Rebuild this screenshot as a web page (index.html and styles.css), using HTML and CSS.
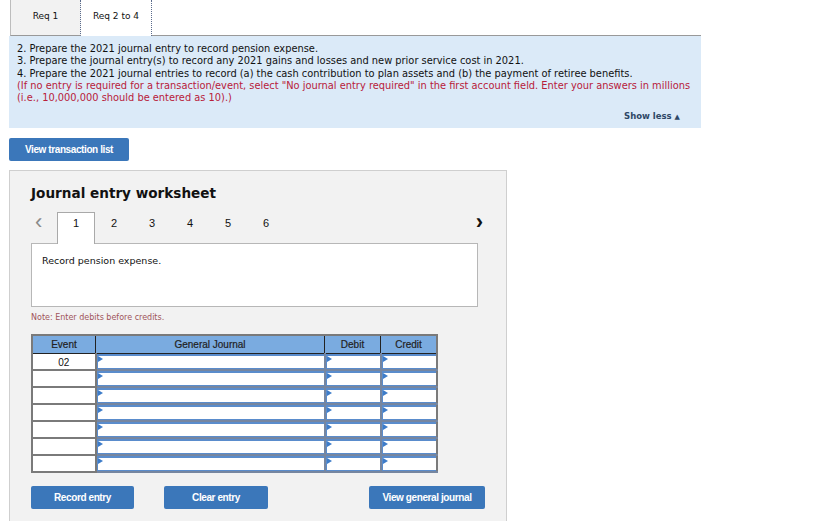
FILE: index.html
```html
<!DOCTYPE html>
<html lang="en">

<head>
  <meta charset="UTF-8">
  <title>Journal Entry Worksheet</title>
  <link rel="stylesheet" href="styles.css">
</head>

<body>

  <div class="req-tabs">
    <div class="req-tab">Req 1</div>
    <div class="req-tab active">Req 2 to 4</div>
    <div class="req-fill"></div>
  </div>

  <div class="instructions">
    <p>2. Prepare the 2021 journal entry to record pension expense.</p>
    <p>3. Prepare the journal entry(s) to record any 2021 gains and losses and new prior service cost in 2021.</p>
    <p>4. Prepare the 2021 journal entries to record (a) the cash contribution to plan assets and (b) the payment of retiree benefits.</p>
    <p class="warn">(If no entry is required for a transaction/event, select "No journal entry required" in the first account field. Enter your answers in millions (i.e., 10,000,000 should be entered as 10).)</p>
    <div class="show-less">Show less <span class="tri">&#9650;</span></div>
  </div>

  <button class="btn btn-list">View transaction list</button>

  <div class="worksheet">
    <h2>Journal entry worksheet</h2>

    <div class="nav">
      <span class="arrow prev">&lsaquo;</span>
      <span class="num current">1</span>
      <span class="num">2</span>
      <span class="num">3</span>
      <span class="num">4</span>
      <span class="num">5</span>
      <span class="num">6</span>
      <span class="arrow next">&rsaquo;</span>
    </div>

    <div class="desc">Record pension expense.</div>

    <div class="note">Note: Enter debits before credits.</div>

    <table class="journal">
      <thead>
        <tr>
          <th class="c-event">Event</th>
          <th class="c-acct">General Journal</th>
          <th class="c-amt">Debit</th>
          <th class="c-amt">Credit</th>
        </tr>
      </thead>
      <tbody>
        <tr><td class="ev">02</td><td class="inp"><div></div></td><td class="inp"><div></div></td><td class="inp"><div></div></td></tr>
        <tr><td class="ev"></td><td class="inp"><div></div></td><td class="inp"><div></div></td><td class="inp"><div></div></td></tr>
        <tr><td class="ev"></td><td class="inp"><div></div></td><td class="inp"><div></div></td><td class="inp"><div></div></td></tr>
        <tr><td class="ev"></td><td class="inp"><div></div></td><td class="inp"><div></div></td><td class="inp"><div></div></td></tr>
        <tr><td class="ev"></td><td class="inp"><div></div></td><td class="inp"><div></div></td><td class="inp"><div></div></td></tr>
        <tr><td class="ev"></td><td class="inp"><div></div></td><td class="inp"><div></div></td><td class="inp"><div></div></td></tr>
        <tr><td class="ev"></td><td class="inp"><div></div></td><td class="inp"><div></div></td><td class="inp"><div></div></td></tr>
      </tbody>
    </table>

    <div class="actions">
      <button class="btn btn-record">Record entry</button>
      <button class="btn btn-clear">Clear entry</button>
      <button class="btn btn-view">View general journal</button>
    </div>
  </div>

</body>

</html>
```

FILE: styles.css
```css
body {
  margin: 0;
  font-family: "DejaVu Sans", Verdana, sans-serif;
  color: #111;
  background-color: #fff;
}

.req-tabs {
  display: flex;
  margin-left: 10px;
  width: 691px;
  height: 36px;
}

.req-tab {
  box-sizing: border-box;
  width: 71px;
  padding-top: 11px;
  text-align: center;
  font-size: 9px;
  background-color: #f2f2f2;
  border-left: 1px solid #bdbdbd;
  border-right: 1px dotted #5a6b8c;
  border-bottom: 1px solid #999;
}

.req-tab.active {
  background-color: #fff;
  border-left: 0;
  border-bottom: 0;
}

.req-fill {
  flex: 1;
  border-bottom: 1px solid #999;
}

.instructions {
  margin-left: 9px;
  width: 676px;
  padding: 7px 8px 4px 8px;
  background-color: #dbeaf8;
  font-size: 9.85px;
  line-height: 12.3px;
}

.instructions p {
  margin: 0;
}

.instructions .warn {
  color: #b8203a;
}

.show-less {
  text-align: right;
  margin-top: 6px;
  padding-right: 13px;
  font-size: 8.5px;
  font-weight: bold;
  color: #2e4766;
}

.show-less .tri {
  font-size: 7px;
}

.btn {
  border: 0;
  border-radius: 2px;
  background-color: #3b77ba;
  color: #fff;
  font-family: "Liberation Sans", Arial, sans-serif;
  font-size: 10px;
  font-weight: bold;
  letter-spacing: -0.4px;
  height: 23px;
  padding: 0;
  cursor: pointer;
}

.btn-list {
  display: block;
  margin: 10px 0 0 9px;
  width: 120px;
}

.worksheet {
  box-sizing: border-box;
  margin: 9px 0 0 9px;
  width: 498px;
  padding: 14px 0 24px 21px;
  background-color: #f2f2f2;
  border: 1px solid #cfcfcf;
}

.worksheet h2 {
  margin: 0;
  font-size: 13.6px;
  font-weight: bold;
  color: #111;
}

.nav {
  display: flex;
  align-items: flex-start;
  margin-top: 11px;
  width: 452px;
  height: 31px;
  font-family: "Liberation Sans", Arial, sans-serif;
  font-size: 11px;
}

.nav .num {
  box-sizing: border-box;
  width: 38px;
  height: 24px;
  text-align: center;
  line-height: 22px;
}

.nav .num.current {
  height: 32px;
  background-color: #fff;
  border: 1px solid #a9a9a9;
  border-bottom: 0;
  line-height: 20px;
}

.nav .arrow {
  box-sizing: border-box;
  font-size: 22px;
  line-height: 20px;
  height: 24px;
}

.nav .prev {
  width: 26px;
  padding-left: 4px;
  color: #8a8a8a;
}

.nav .next {
  margin-left: auto;
  color: #111;
  font-weight: bold;
}

.desc {
  box-sizing: border-box;
  width: 447px;
  height: 64px;
  padding: 11px 10px;
  background-color: #fff;
  border: 1px solid #b7b7b7;
  font-size: 9.5px;
}

.note {
  margin-top: 6px;
  font-size: 8px;
  color: #a0545a;
}

.journal {
  margin-top: 12px;
  border-collapse: collapse;
  border: 2px solid #7a7a7a;
  font-family: "Liberation Sans", Arial, sans-serif;
  font-size: 10px;
}

.journal th {
  height: 17px;
  padding: 0;
  background-color: #7aabe0;
  font-weight: normal;
  color: #222;
  border-left: 1px solid #222;
  border-bottom: 1px solid #222;
  -webkit-text-stroke: 0.2px #222;
}

.journal th:first-child {
  border-left: 0;
}

.c-event {
  width: 62px;
}

.c-acct {
  width: 228px;
}

.c-amt {
  width: 55px;
}

.journal td {
  height: 15px;
  padding: 0;
  border: 1px solid #7a7a7a;
  border-top: 0;
}

.journal td.ev {
  background-color: #fff;
  text-align: center;
  vertical-align: top;
  padding-top: 3px;
  height: 12px;
  border-right: 2px solid #7a7a7a;
  border-bottom: 2px solid #7a7a7a;
}

.journal td.inp {
  border-bottom: 2px solid #7686a0;
  border-left: 2px solid #7686a0;
}

.journal td.inp div {
  position: relative;
  box-sizing: border-box;
  height: 15px;
  background-color: #fff;
  border-top: 2px solid #5a8ccc;
  border-left: 1px solid #5a8ccc;
  border-bottom: 1px solid #5a8ccc;
}

.journal td.inp div::before {
  content: "";
  position: absolute;
  left: 0;
  top: 0;
  border-top: 3px solid transparent;
  border-bottom: 3px solid transparent;
  border-left: 5px solid #3d7cc9;
}

.actions {
  display: flex;
  margin-top: 13px;
}

.btn-record {
  width: 103px;
}

.btn-clear {
  width: 104px;
  margin-left: 30px;
}

.btn-view {
  width: 116px;
  margin-left: 101px;
}
```
